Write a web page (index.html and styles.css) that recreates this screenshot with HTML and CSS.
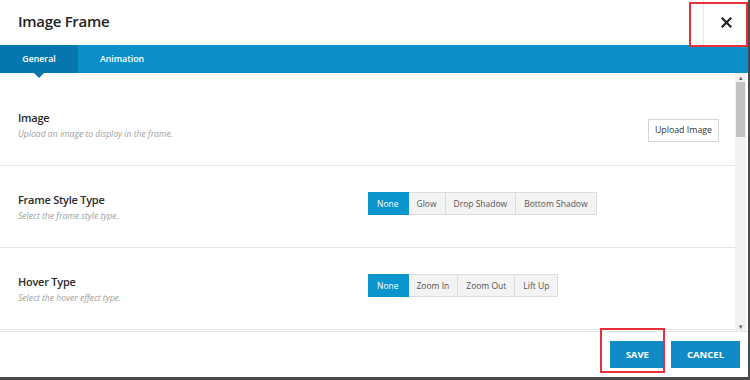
FILE: index.html
```html
<!DOCTYPE html>
<html lang="en">
<head>
  <meta charset="UTF-8" />
  <title>Image Frame</title>
  <link rel="stylesheet" href="styles.css">
</head>
<body>
  <div class="modal">
    <div class="cabecera">
      <div class="titulo">Image Frame</div>
      <div class="cerrar">
        <svg width="11" height="11" viewBox="0 0 11 11"><path d="M1.5 1.5 L9.5 9.5 M9.5 1.5 L1.5 9.5" stroke="#222" stroke-width="2.2" stroke-linecap="square"/></svg>
      </div>
    </div>

    <div class="pestanas">
      <div class="pestana activa">General</div>
      <div class="pestana">Animation</div>
    </div>

    <div class="cuerpo">
      <div class="secciones">
        <div class="seccion">
          <div class="etiqueta">
            <div class="nombre">Image</div>
            <div class="ayuda">Upload an image to display in the frame.</div>
          </div>
          <div class="control derecha">
            <button class="subir">Upload Image</button>
          </div>
        </div>

        <div class="seccion">
          <div class="etiqueta">
            <div class="nombre">Frame Style Type</div>
            <div class="ayuda">Select the frame style type.</div>
          </div>
          <div class="control">
            <div class="grupo">
              <span class="opcion activa">None</span>
              <span class="opcion">Glow</span>
              <span class="opcion">Drop Shadow</span>
              <span class="opcion">Bottom Shadow</span>
            </div>
          </div>
        </div>

        <div class="seccion">
          <div class="etiqueta">
            <div class="nombre">Hover Type</div>
            <div class="ayuda">Select the hover effect type.</div>
          </div>
          <div class="control">
            <div class="grupo">
              <span class="opcion activa">None</span>
              <span class="opcion">Zoom In</span>
              <span class="opcion">Zoom Out</span>
              <span class="opcion">Lift Up</span>
            </div>
          </div>
        </div>
      </div>

      <div class="barra">
        <div class="flecha">&#9652;</div>
        <div class="pista"><div class="pulgar"></div></div>
        <div class="flecha">&#9662;</div>
      </div>
    </div>

    <div class="pie">
      <button class="accion">SAVE</button>
      <button class="accion">CANCEL</button>
    </div>

    <div class="marca marca-cerrar"></div>
    <div class="marca marca-guardar"></div>
  </div>
</body>
</html>
```

FILE: styles.css
```css
body {
  margin: 0;
  background-color: #4a4a4a;
  font-family: "Open Sans", "Noto Sans", sans-serif;
}
.modal {
  position: relative;
  width: 748px;
  height: 377px;
  background-color: #fff;
  display: flex;
  flex-direction: column;
}
.cabecera {
  height: 45px;
  display: flex;
  align-items: stretch;
  justify-content: space-between;
}
.titulo {
  padding-left: 18px;
  padding-top: 11px;
  font-size: 15px;
  font-weight: 600;
  color: #222;
  letter-spacing: -0.3px;
}
.cerrar {
  width: 44px;
  border-left: 1px solid #e6e6e6;
  display: flex;
  align-items: center;
  justify-content: center;
}
.pestanas {
  height: 28px;
  background-color: #0b8fc9;
  display: flex;
}
.pestana {
  position: relative;
  width: 78px;
  color: #fff;
  font-size: 8.8px;
  font-weight: 600;
  display: flex;
  align-items: center;
  justify-content: center;
}
.pestana + .pestana {
  width: 88px;
}
.pestana.activa {
  background-color: #0676ae;
}
.pestana.activa::after {
  content: "";
  position: absolute;
  left: 34px;
  bottom: -5px;
  border-left: 5px solid transparent;
  border-right: 5px solid transparent;
  border-top: 5px solid #0676ae;
}
.cuerpo {
  flex: 1;
  display: flex;
  border-bottom: 1px solid #e3e3e3;
  overflow: hidden;
}
.secciones {
  flex: 1;
  padding-top: 11px;
}
.seccion {
  height: 81px;
  border-bottom: 1px solid #e6e6e6;
  display: grid;
  grid-template-columns: 368px 1fr;
  align-items: center;
}
.etiqueta {
  padding-left: 18px;
  padding-top: 1px;
}
.nombre {
  font-size: 11px;
  font-weight: 600;
  color: #2b2b2b;
  letter-spacing: -0.25px;
}
.ayuda {
  margin-top: 3px;
  font-size: 8.6px;
  font-style: italic;
  color: #a0a0a0;
}
.control {
  padding-bottom: 6px;
}
.control.derecha {
  display: flex;
  justify-content: flex-end;
  padding-right: 16px;
  padding-bottom: 0;
  padding-top: 11px;
}
.subir {
  font-family: inherit;
  font-size: 8.8px;
  color: #333;
  background-color: #fff;
  border: 1px solid #d6d6d6;
  padding: 0 6px;
  height: 23px;
}
.grupo {
  display: flex;
}
.opcion {
  height: 21px;
  padding: 0 8px;
  font-size: 8.5px;
  color: #555;
  background-color: #f3f3f3;
  border: 1px solid #dcdcdc;
  border-left: none;
  display: flex;
  align-items: center;
}
.opcion.activa {
  padding: 0 9px;
  background-color: #0b95cd;
  border-color: #0b95cd;
  color: #fff;
}
.barra {
  width: 11px;
  margin-right: 2px;
  background-color: #f1f1f1;
  display: flex;
  flex-direction: column;
}
.flecha {
  height: 9px;
  font-size: 7px;
  line-height: 9px;
  text-align: center;
  color: #666;
}
.pista {
  flex: 1;
}
.pulgar {
  margin: 0 1px;
  height: 55px;
  background-color: #c1c1c1;
}
.pie {
  height: 45px;
  display: flex;
  justify-content: flex-end;
  align-items: center;
  gap: 6px;
  padding-right: 8px;
}
.accion {
  font-family: inherit;
  height: 27px;
  padding: 0 16px;
  font-size: 9.5px;
  font-weight: 700;
  color: #fff;
  background-color: #108bc6;
  border: none;
}
.marca {
  position: absolute;
  border: 2px solid #e8303a;
}
.marca-cerrar {
  left: 689px;
  top: 2px;
  width: 55px;
  height: 41px;
}
.marca-guardar {
  left: 600px;
  top: 328px;
  width: 61px;
  height: 41px;
}
```
